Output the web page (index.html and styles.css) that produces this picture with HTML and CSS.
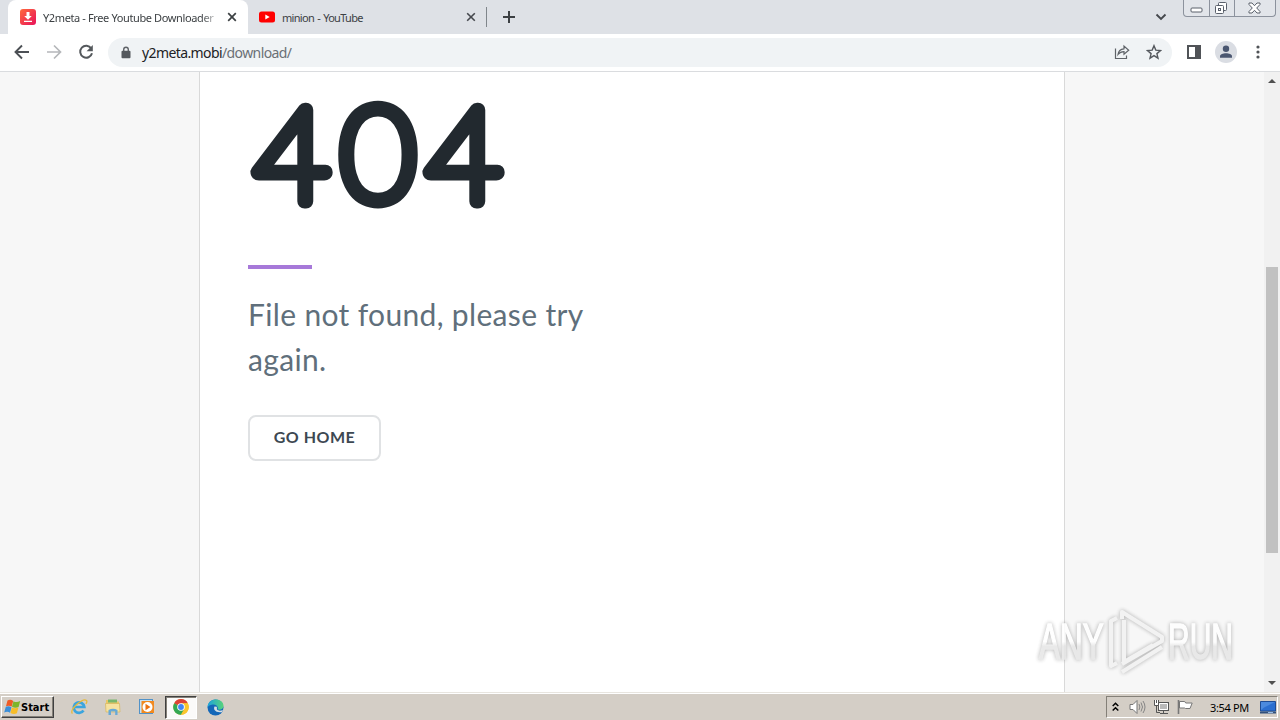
FILE: index.html
```
<!DOCTYPE html>
<html lang="en">
<head>
    <meta charset="UTF-8">
    <meta name="viewport" content="width=device-width, initial-scale=1.0">
    <title>Y2meta - Free Youtube Downloader</title>
    <link rel="stylesheet" href="styles.css">
</head>
<body>
    <div class="tabs">
        <div class="tab active">
            <svg class="favicon" width="16" height="16" viewBox="0 0 16 16">
                <defs>
                    <linearGradient id="red" x1="0" y1="0" x2="1" y2="1">
                        <stop offset="0" stop-color="#ff6a3c"/>
                        <stop offset="1" stop-color="#e8115b"/>
                    </linearGradient>
                </defs>
                <rect width="16" height="16" rx="3" fill="url(#red)"/>
                <path d="M6.500 3h3v4h2.300L8 10.800 4.200 7h2.300zM4 11.700h8V13H4z" fill="#fff"/>
            </svg>
            <span class="tab-title fade title-one">Y2meta - Free Youtube Downloader</span>
            <svg class="tab-close" width="10" height="10" viewBox="0 0 10 10"><path d="M1.200 1.200l7.600 7.600M8.800 1.200L1.200 8.800" stroke="#3c4043" stroke-width="1.700"/></svg>
        </div>
        <div class="tab">
            <svg class="favicon" width="16" height="16" viewBox="0 0 16 16">
                <rect y="2.500" width="16" height="11" rx="2.500" fill="#f00"/>
                <path d="M6.300 5.500v5L10.700 8z" fill="#fff"/>
            </svg>
            <span class="tab-title title-two">minion - YouTube</span>
            <svg class="tab-close" width="10" height="10" viewBox="0 0 10 10"><path d="M1.200 1.200l7.600 7.600M8.800 1.200L1.200 8.800" stroke="#45484d" stroke-width="1.600"/></svg>
        </div>
        <div class="tab-divider"></div>
        <svg class="new-tab" width="12" height="12" viewBox="0 0 12 12"><path d="M6 0v12M0 6h12" stroke="#3c4043" stroke-width="2"/></svg>
        <svg class="tab-search" width="12" height="8" viewBox="0 0 12 8"><path d="M1.500 1.500L6 6l4.500-4.500" fill="none" stroke="#45484d" stroke-width="1.900"/></svg>
        <div class="window-buttons">
            <span class="wb wb-min"><svg width="14" height="6" viewBox="0 0 14 6"><rect x="1" y="1" width="11" height="4" rx="1" fill="#fff" stroke="#5a606b"/></svg></span>
            <span class="wb wb-max"><svg width="14" height="14" viewBox="0 0 14 14"><g fill="#fff" stroke="#5a606b"><rect x="4.500" y="1.500" width="8" height="8" rx="1"/><rect x="1.500" y="4.500" width="8" height="8" rx="1"/><rect x="4.500" y="7.500" width="2" height="2"/></g></svg></span>
            <span class="wb wb-close"><svg width="13" height="12" viewBox="0 0 13 12"><path d="M1 1h3l2.500 2.700L9 1h3v1.500L8.700 6 12 9.500V11H9L6.500 8.300 4 11H1V9.500L4.300 6 1 2.500z" fill="#fff" stroke="#5a606b"/></svg></span>
        </div>
    </div>

    <div class="toolbar">
        <svg class="nav" width="16" height="16" viewBox="0 0 16 16"><path d="M15 8H2M8 1.500L1.500 8 8 14.500" fill="none" stroke="#4c5055" stroke-width="1.900"/></svg>
        <svg class="nav" width="16" height="16" viewBox="0 0 16 16"><path d="M1 8h13M8 1.500L14.500 8 8 14.500" fill="none" stroke="#b5b7ba" stroke-width="1.700"/></svg>
        <svg class="nav" width="16" height="16" viewBox="0 0 16 16"><path d="M13.200 4.400A6 6 0 1 0 14 9.300" fill="none" stroke="#54585c" stroke-width="2"/><path d="M14.800 1v6.200H8.600z" fill="#54585c"/></svg>
        <div class="address">
            <svg class="lock" width="10" height="13" viewBox="0 0 10 13"><path d="M2.700 5V3.500a2.300 2.300 0 0 1 4.600 0V5" fill="none" stroke="#5f6368" stroke-width="1.400"/><rect x=".5" y="4.700" width="9" height="7.600" rx="1" fill="#54585d"/></svg>
            <span class="url">y2meta.mobi<span class="path">/download/</span></span>
            <svg class="share" width="16" height="16" viewBox="0 0 16 16" fill="none" stroke="#5f6368" stroke-width="1.200"><path d="M1.500 4.500v10h11v-3"/><path d="M4 10.500c.4-3.600 2.500-5.500 6-5.700V2l4.700 4.200L10 10.300V7.700C7.400 7.700 5.600 8.500 4 10.500z"/></svg>
            <svg class="star" width="16" height="16" viewBox="0 0 16 16"><path d="M8 1.700l1.800 4.400 4.700.4-3.600 3.100 1.100 4.600L8 11.700l-4 2.500 1.100-4.600-3.600-3.100 4.700-.4z" fill="none" stroke="#54585d" stroke-width="1.400"/></svg>
        </div>
        <svg class="side-panel" width="14" height="14" viewBox="0 0 14 14"><path d="M0 0h14v14H0zM2 2v10h6V2z" fill="#505357" fill-rule="evenodd"/></svg>
        <svg class="profile" width="22" height="22" viewBox="0 0 22 22"><circle cx="11" cy="11" r="11" fill="#dadde3"/><circle cx="11" cy="7.800" r="3.200" fill="#4a5670"/><path d="M5 16.800v-1.500c0-4 12-4 12 0v1.500z" fill="#4a5670"/></svg>
        <svg class="more" width="4" height="16" viewBox="0 0 4 16" fill="#505357"><circle cx="2" cy="3" r="1.600"/><circle cx="2" cy="8" r="1.600"/><circle cx="2" cy="13" r="1.600"/></svg>
    </div>

    <div class="viewport">
        <div class="page">
            <div class="content">
                <svg class="code" width="290" height="168" viewBox="0 0 290 168">
                    <text class="code-text" x="6" y="128.500">404</text>
                </svg>
                <div class="line"></div>
                <p class="message">File not found, please try again.</p>
                <button class="home">GO HOME</button>
            </div>
        </div>
        <div class="scrollbar">
            <svg width="8" height="4" viewBox="0 0 8 4"><path d="M0 4l4-4 4 4z" fill="#505050"/></svg>
            <div class="thumb"></div>
            <svg width="8" height="4" viewBox="0 0 8 4"><path d="M0 0l4 4 4-4z" fill="#505050"/></svg>
        </div>
        <svg class="watermark" width="230" height="76" viewBox="0 0 230 76">
            <defs>
                <linearGradient id="fadeWhite" x1="0" y1="0" x2="0" y2="1">
                    <stop offset=".5" stop-color="#fff"/>
                    <stop offset=".58" stop-color="#e6e6e6"/>
                </linearGradient>
            </defs>
            <g class="brand" fill="url(#fadeWhite)" stroke="url(#fadeWhite)">
                <text transform="translate(9 53) scale(.63 1)">ANY</text>
                <text transform="translate(138 53) scale(.6 1)">RUN</text>
            </g>
            <g fill="none" stroke="#f2f2f2" stroke-width="4" stroke-linejoin="round">
                <path d="M94 14v42l29-17M87 12l-6 3v45l6-3"/>
                <path d="M92 13V6l40 25v4L92 58M92 66l40-25"/>
            </g>
        </svg>
    </div>

    <div class="taskbar">
        <div class="start">
            <svg width="17" height="16" viewBox="0 0 17 16">
                <path d="M3.500 1.500Q6.500 0 9.200 2L7.700 7.600Q5 6 2 7.200z" fill="#ee5b25"/>
                <path d="M9.500 2.200Q12.500 4 16.200 2L14.600 8Q11.500 9.500 8 7.800z" fill="#7db52b"/>
                <path d="M1.800 7.800Q4.700 6.500 7.500 8.200L6 13.800Q3.500 12 .2 13.600z" fill="#3a8ed8"/>
                <path d="M7.900 8.500Q11 10 14.400 8.500L12.900 14.300Q9.800 16 6.400 14z" fill="#f7bd28"/>
            </svg>
            <span>Start</span>
        </div>
        <div class="launchers">
            <span class="launcher">
                <svg width="18" height="18" viewBox="0 0 18 18"><path d="M13.500 12.500A5.300 5.300 0 1 1 14.300 9H5" fill="none" stroke="#3ba5de" stroke-width="2.700"/><path d="M2.500 15.500C-1.500 12 13-.5 16.500 2.500c.8.700.3 2-.6 3.400" fill="none" stroke="#e6b93b" stroke-width="1.300"/></svg>
            </span>
            <span class="launcher">
                <svg width="18" height="18" viewBox="0 0 18 18"><path d="M2 2h5l1 1.500h7V13H2z" fill="#e9c766"/><path d="M4 1.500h9v3H4z" fill="#78b66c"/><path d="M1.500 5.500h14L16 14H2z" fill="#f6e2a0" stroke="#d6b55c" stroke-width=".7"/><path d="M4.500 17v-5q4.500-2.500 9 0v5h-2.300v-3.500H7V17z" fill="#67a9d6"/></svg>
            </span>
            <span class="launcher">
                <svg width="18" height="18" viewBox="0 0 18 18"><rect x="1.500" y="1.500" width="13" height="14" fill="#c9e2f4" stroke="#5192c8"/><rect x="3.500" y="3" width="12.500" height="12" fill="#f18a20"/><circle cx="9.500" cy="9" r="5" fill="#fff"/><path d="M7.500 5.800v6.400l5-3.200z" fill="#ec7211"/></svg>
            </span>
            <span class="launcher pressed">
                <svg width="16" height="16" viewBox="0 0 16 16"><circle cx="8" cy="8" r="7.700" fill="#e8b92a"/><path d="M8 8L1.200 4.200A7.700 7.700 0 0 1 14.800 4.200H8z" fill="#dd4236"/><path d="M1.200 4.200A7.700 7.700 0 0 0 8 15.700L11.300 10 8 8z" fill="#34a853"/><path d="M14.800 4.200A7.700 7.700 0 0 1 8 15.700l3.300-5.700L10 4.200z" fill="#fbc52c"/><circle cx="8" cy="8" r="3.800" fill="#fff"/><circle cx="8" cy="8" r="2.900" fill="#4285f4"/></svg>
            </span>
            <span class="launcher">
                <svg width="17" height="17" viewBox="0 0 17 17">
                    <defs><linearGradient id="edge" x1="0" y1="0" x2="1" y2="0"><stop offset="0" stop-color="#1ca4dd"/><stop offset="1" stop-color="#57d37a"/></linearGradient></defs>
                    <circle cx="8.500" cy="8.500" r="8" fill="#1467b8"/>
                    <path d="M.5 8.500C.8-2 16.500-1.500 16.500 7c0 3-3.500 4.500-6 3.300C12 8 9 5 5.500 5.500 3 5.800 1 7 .5 8.500z" fill="url(#edge)"/>
                    <path d="M7.500 7.500c-1.500 3 1 6.500 7.500 5.500l1-2c-2.500 1-5 .8-6-.5-.4-.6.3-1.800-.3-2.800z" fill="#d5dfe4"/>
                </svg>
            </span>
        </div>
        <div class="tray">
            <svg class="chevrons" width="7" height="10" viewBox="0 0 7 10"><path d="M.7 4l2.800-2.800L6.300 4M.7 8.500l2.800-2.800 2.800 2.800" fill="none" stroke="#000" stroke-width="1.500"/></svg>
            <svg class="speaker" width="17" height="16" viewBox="0 0 17 16"><path d="M1 5.500h3L8 1.500v13l-4-4H1z" fill="#fff" stroke="#777"/><path d="M10 5q1.700 3 0 6M12 3.500q3 4.500 0 9M14 2q4 6 0 12" fill="none" stroke="#858585"/></svg>
            <svg class="network" width="17" height="16" viewBox="0 0 17 16"><rect x="5.500" y="3.500" width="10" height="8" fill="#b9b9b9" stroke="#555"/><path d="M6.500 10.500v-6h8v6z" fill="none" stroke="#fff"/><path d="M10.500 12v2M7 14.500h8M3.500 6v7.500H7" fill="none" stroke="#555"/><path d="M1.500 1v5.500h4V1M3.500 1v3" fill="#fff" stroke="#555"/></svg>
            <svg class="flag" width="17" height="16" viewBox="0 0 17 16"><path d="M2.500 2.500h5.200l1 1.500h6.500L13 9.500H8.500L7.500 9h-5z" fill="#fff" stroke="#777"/><path d="M1.500 1v14" stroke="#777" stroke-width="1.600"/></svg>
            <span class="clock">3:54 PM</span>
            <svg class="desktop" width="16" height="13" viewBox="0 0 16 13"><path d="M.5.500h15v9.500H.5z" fill="#2b6fd0" stroke="#1e4c94"/><path d="M1 1h14L4 6.500 1 9z" fill="#4b8ade"/><path d="M0 11.500h16" stroke="#31507c" stroke-width="2"/><path d="M8 11.500h5" stroke="#98bce6"/></svg>
        </div>
    </div>
</body>
</html>
```
FILE: styles.css
```
* {
    box-sizing: border-box;
}
body {
    margin: 0;
    width: 1280px;
    height: 720px;
    display: flex;
    flex-direction: column;
    overflow: hidden;
    background: #fff;
    font-family: "Noto Sans", sans-serif;
}
svg {
    display: block;
    flex-shrink: 0;
}
.tabs {
    height: 34px;
    display: flex;
    align-items: center;
    padding-left: 8px;
    background: #dee1e6;
}
.tab {
    height: 34px;
    width: 239px;
    display: flex;
    align-items: center;
    padding: 0 11px;
}
.tab.active {
    width: 240px;
    padding-left: 12px;
    background: #fff;
    border-radius: 8px 8px 0 0;
}
.tab-title {
    flex: 1;
    margin-left: 7px;
    overflow: hidden;
    white-space: nowrap;
    font-size: 11px;
    color: #3c4043;
}
.title-one {
    letter-spacing: -0.38px;
}
.title-two {
    letter-spacing: -0.7px;
    word-spacing: 1px;
}
.fade {
    -webkit-mask-image: linear-gradient(to right, #000 158px, transparent 178px);
}
.tab-divider {
    width: 1px;
    height: 20px;
    margin-left: -1px;
    background: #80868b;
}
.new-tab {
    margin-left: 16px;
}
.tab-search {
    margin-left: auto;
    margin-right: 16px;
}
.window-buttons {
    display: flex;
    align-self: flex-start;
    width: 93px;
    height: 17px;
    margin-right: 4px;
    border: 1px solid #8c929d;
    border-top: 0;
    border-radius: 0 0 4px 4px;
    background: #e2e5ea;
}
.wb {
    display: flex;
    align-items: center;
    justify-content: center;
}
.wb-min {
    width: 25px;
    padding-top: 4px;
}
.wb-max {
    width: 25px;
    padding-right: 2px;
    border-left: 1px solid #8c929d;
}
.wb-close {
    flex: 1;
    padding-right: 2px;
    border-left: 1px solid #8c929d;
}
.toolbar {
    height: 38px;
    display: flex;
    align-items: center;
    padding: 0 20px 1px 14px;
    border-bottom: 1px solid #dadcdf;
    background: #fff;
}
.nav {
    margin-right: 16px;
}
.address {
    width: 1064px;
    height: 29px;
    display: flex;
    align-items: center;
    margin-left: -2px;
    padding: 0 10px 0 13px;
    border-radius: 15px;
    background: #f0f3f5;
}
.url {
    margin-left: 11px;
    font-size: 14px;
    letter-spacing: -0.6px;
    color: #202124;
}
.path {
    color: #6b7075;
}
.share {
    margin-left: auto;
    margin-right: 16px;
}
.side-panel {
    margin-left: 15px;
}
.profile {
    margin-left: 14px;
}
.more {
    margin-left: 19px;
}
.viewport {
    position: relative;
    height: 620px;
    display: flex;
    background: #f7f7f7;
}
.page {
    width: 866px;
    margin-left: 199px;
    border-left: 1px solid #d9d9d9;
    border-right: 1px solid #d9d9d9;
    background: #fff;
}
.content {
    width: 432px;
    padding: 0 48px;
}
.code-text {
    font-family: Lato, sans-serif;
    font-size: 131px;
    font-weight: 100;
    letter-spacing: 10px;
    fill: #22292f;
    stroke: #22292f;
    stroke-width: 14.5px;
    stroke-linejoin: round;
}
.line {
    width: 64px;
    height: 4px;
    margin-top: 25px;
    background: #a779d9;
}
.message {
    margin: 23px -10px 33px 0;
    font-family: Lato, sans-serif;
    font-size: 30px;
    line-height: 45px;
    letter-spacing: 0.34px;
    color: #606f7b;
}
.home {
    display: block;
    width: 133px;
    height: 46px;
    padding: 0 0 3px;
    border: 2px solid #e0e2e4;
    border-radius: 8px;
    background: #fff;
    font-family: Lato, sans-serif;
    font-size: 16px;
    font-weight: bold;
    letter-spacing: 0.5px;
    color: #3d4852;
}
.scrollbar {
    width: 16px;
    margin-left: auto;
    padding: 7px 2px;
    display: flex;
    flex-direction: column;
    align-items: center;
    background: #f1f1f1;
}
.thumb {
    width: 12px;
    height: 286px;
    margin: 184px 0 auto;
    background: #c1c1c1;
}
.watermark {
    position: absolute;
    left: 1030px;
    top: 534px;
    filter: drop-shadow(0 0 2px rgba(0, 0, 0, 0.35));
    opacity: 0.85;
}
.brand {
    font-family: "Liberation Sans", sans-serif;
    font-size: 50px;
    stroke-width: 1.5px;
}
.taskbar {
    height: 28px;
    display: flex;
    align-items: center;
    padding: 1px 2px 0 1px;
    background: #d4cec6;
    border-top: 1px solid #e8e5df;
    box-shadow: inset 0 1px #fff;
}
.start {
    width: 53px;
    height: 22px;
    display: flex;
    align-items: center;
    padding-left: 2px;
    border: 1px solid;
    border-color: #fff #404040 #404040 #fff;
    box-shadow: inset -1px -1px #848078;
    font-family: "DejaVu Sans Condensed", "DejaVu Sans", sans-serif;
    font-size: 11px;
    font-weight: bold;
    color: #000;
}
.launchers {
    display: flex;
    margin-left: 8px;
}
.launcher {
    width: 34px;
    height: 23px;
    display: flex;
    align-items: center;
    justify-content: center;
}
.pressed {
    width: 32px;
    margin: 0 1px;
    border: 1px solid;
    border-color: #404040 #fff #fff #404040;
    box-shadow: inset 1px 1px #848078;
    background: #fbfaf9;
}
.tray {
    width: 172px;
    height: 22px;
    display: flex;
    align-items: center;
    margin-left: auto;
    padding-left: 5px;
    border: 1px solid;
    border-color: #848078 #fff #fff #848078;
}
.speaker {
    margin-left: 10px;
}
.network {
    margin-left: 7px;
}
.flag {
    margin-left: 7px;
}
.clock {
    margin-left: 16px;
    width: 39px;
    white-space: nowrap;
    font-size: 11px;
    letter-spacing: -0.35px;
    color: #000;
}
.desktop {
    margin-left: auto;
    margin-right: 1px;
}
```
